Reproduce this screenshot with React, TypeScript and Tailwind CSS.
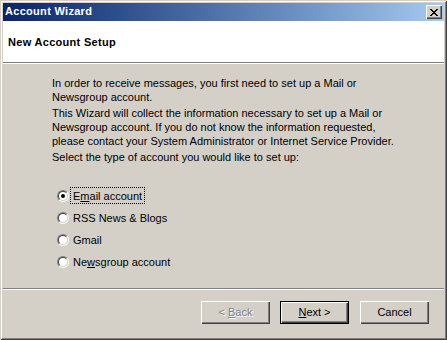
import React, { useState } from 'react';

const font = { fontFamily: '"Liberation Sans", Arial, sans-serif' };

function Radio({ checked }: { checked: boolean }) {
  return (
    <div className="w-[12px] h-[12px] shrink-0 rounded-full border border-t-[#808080] border-l-[#808080] border-b-white border-r-white">
      <div className="w-full h-full rounded-full bg-white border border-t-[#404040] border-l-[#404040] border-b-[#d4d0c8] border-r-[#d4d0c8] flex items-center justify-center">
        {checked && <div className="w-[4px] h-[4px] rounded-full bg-black" />}
      </div>
    </div>
  );
}

function Button({ children, disabled, isDefault }: { children: React.ReactNode; disabled?: boolean; isDefault?: boolean }) {
  return (
    <div
      className={`w-[69px] h-[23px] flex items-center justify-center text-[11px] bg-[#d4d0c8] ${
        isDefault
          ? 'shadow-[inset_1px_1px_#000,inset_-1px_-1px_#000,inset_2px_2px_#fff,inset_-2px_-2px_#404040,inset_-3px_-3px_#808080]'
          : 'shadow-[inset_1px_1px_#fff,inset_-1px_-1px_#404040,inset_-2px_-2px_#808080]'
      } ${disabled ? 'text-[#808080] [text-shadow:1px_1px_0_#fff]' : 'text-black'}`}
    >
      {children}
    </div>
  );
}

export default function App() {
  const [selected, setSelected] = useState('email');

  const options = [
    { id: 'email', pre: 'E', u: 'm', post: 'ail account' },
    { id: 'rss', pre: 'RSS News & Blogs', u: '', post: '' },
    { id: 'gmail', pre: 'Gmail', u: '', post: '' },
    { id: 'news', pre: 'Ne', u: 'w', post: 'sgroup account' }
  ];

  return (
    <div
      style={font}
      className="w-[447px] h-[340px] bg-[#d4d0c8] p-[3px] flex flex-col shadow-[inset_1px_1px_#d4d0c8,inset_-1px_-1px_#404040,inset_2px_2px_#fff,inset_-2px_-2px_#808080]"
    >
      {/* Title bar */}
      <div className="h-[18px] shrink-0 flex items-center justify-between pl-[2px] pr-[2px] bg-gradient-to-r from-[#0a246a] to-[#a6caf0]">
        <span className="text-white font-bold text-[11px] tracking-[0.3px] -mt-px">Account Wizard</span>
        <div className="w-[16px] h-[14px] bg-[#d4d0c8] flex items-center justify-center shadow-[inset_1px_1px_#fff,inset_-1px_-1px_#404040,inset_-2px_-2px_#808080]">
          <svg width="8" height="7" viewBox="0 0 8 7">
            <path d="M0 0h2v1h1v1h2v-1h1v-1h2v1h-1v1h-1v1h-1v1h1v1h1v1h1v1h-2v-1h-1v-1h-2v1h-1v1h-2v-1h1v-1h1v-1h1v-1h-1v-1h-1v-1h-1z" fill="#000" />
          </svg>
        </div>
      </div>

      {/* Header */}
      <div className="h-[42px] shrink-0 bg-white border-b border-[#808080] pl-[5px] pt-[8px]">
        <span className="font-bold text-[11px] tracking-[0.3px] text-black">New Account Setup</span>
      </div>
      <div className="h-px bg-white shrink-0" />

      {/* Body */}
      <div className="flex-1 pl-[49px] pt-[12px] text-[11px] leading-[14px] text-black">
        <p>In order to receive messages, you first need to set up a Mail or<br />Newsgroup account.</p>
        <p className="mt-[2px]">
          This Wizard will collect the information necessary to set up a Mail or<br />
          Newsgroup account. If you do not know the information requested,<br />
          please contact your System Administrator or Internet Service Provider.
        </p>
        <p className="mt-[2px]">Select the type of account you would like to set up:</p>

        <div className="mt-[23px] ml-[5px] flex flex-col gap-[5px]">
          {options.map((o) => (
            <div key={o.id} onClick={() => setSelected(o.id)} className="h-[17px] flex items-center cursor-default">
              <Radio checked={selected === o.id} />
              <span
                className={`ml-[1px] h-[17px] flex items-center px-[2px] border ${
                  selected === o.id ? 'border-dotted border-black' : 'border-transparent'
                }`}
              >
                {o.pre}
                {o.u && <span className="underline">{o.u}</span>}
                {o.post}
              </span>
            </div>
          ))}
        </div>
      </div>

      {/* Separator */}
      <div className="h-px bg-[#808080] shrink-0" />
      <div className="h-px bg-white shrink-0" />

      {/* Footer */}
      <div className="h-[47px] shrink-0 flex items-start pt-[11px] pl-[198px]">
        <Button disabled>
          &lt; <span className="underline ml-[3px]">B</span>ack
        </Button>
        <div className="ml-[10px]">
          <Button isDefault>
            <span className="underline">N</span>ext &gt;
          </Button>
        </div>
        <div className="ml-[11px]">
          <Button>Cancel</Button>
        </div>
      </div>
    </div>
  );
}
